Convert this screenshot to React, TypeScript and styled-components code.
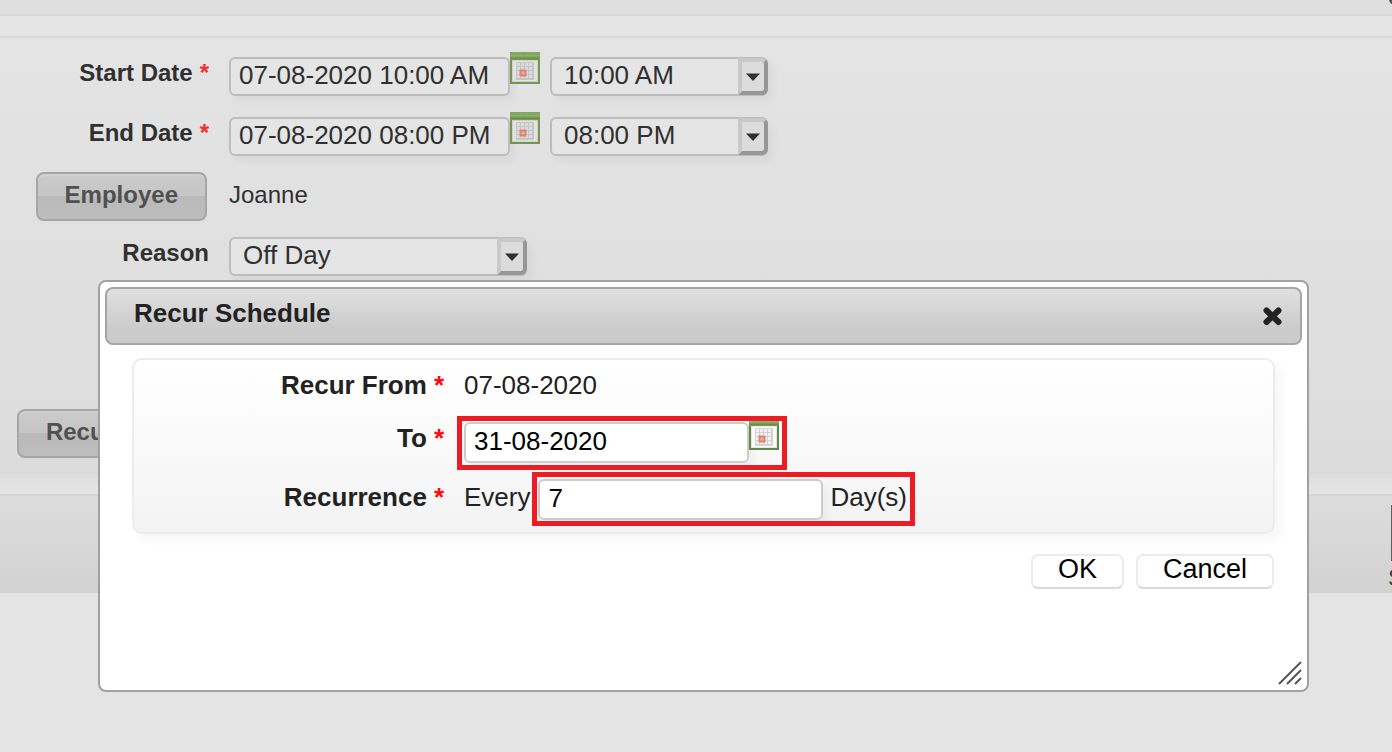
import React, { useState } from "react";
import styled, { createGlobalStyle } from "styled-components";

const GlobalStyle = createGlobalStyle`
  *, *::before, *::after { box-sizing: border-box; }
  html, body { margin: 0; background: #e4e4e4; }
  body, input, select, button { font-family: "Liberation Sans", Arial, Helvetica, sans-serif; }
`;

const Page = styled.div`
  position: relative;
  min-height: 100vh;
  overflow: hidden;
  background: #e4e4e4;
  color: #303030;
  font-size: 24px;
  line-height: 28px;
`;

const TopBar = styled.header`
  display: flex;
  justify-content: flex-end;
  height: 16px;
  overflow: hidden;
  border-bottom: 2px solid #d9d9d9;
  background: #dedede;
`;

const BarDot = styled.svg`
  flex: none;
  width: 12px;
  height: 12px;
  margin: -7px -9px 0 0;
`;

const FormPanel = styled.form`
  display: flex;
  flex-direction: column;
  min-height: 438px;
  margin-top: 20px;
  padding-top: 19px;
  border-top: 2px solid #d8d8d8;
  border-bottom: 2px solid #d8d8d8;
  background: linear-gradient(#e4e4e4, #dcdcdc);
`;

const FormRow = styled.div<{ $height?: number }>`
  display: flex;
  align-items: flex-start;
  min-height: ${(p) => p.$height ?? 60}px;
`;

const LabelCell = styled.div`
  flex: none;
  display: flex;
  justify-content: flex-end;
  width: 209px;
  margin-right: 20px;
`;

const Label = styled.label`
  padding-top: 2px;
  font-weight: bold;
  white-space: nowrap;
`;

const Star = styled.span<{ $bright?: boolean }>`
  margin-left: 7px;
  color: ${(p) => (p.$bright ? "#ff0a0a" : "#ee3030")};
`;

const PageInput = styled.input`
  width: 281px;
  height: 39px;
  padding: 0 8px 2px;
  border: 2px solid #bdbdbd;
  border-radius: 6px;
  outline: none;
  background: #e5e5e5;
  box-shadow: 5px 6px 8px rgba(0, 20, 20, 0.04);
  color: #303030;
  font-size: 26px;
`;

const DialogInput = styled(PageInput)`
  width: 285px;
  height: 41px;
  padding-bottom: 3px;
  border-color: #cccccc;
  background: #fff;
  color: #000;
`;

const IconButton = styled.button<{ $lift: number }>`
  flex: none;
  width: 30px;
  height: 32px;
  margin-top: -${(p) => p.$lift}px;
  padding: 0;
  border: 0;
  background: none;
  svg { display: block; }
`;

const SelectBox = styled.div<{ $width: number }>`
  position: relative;
  width: ${(p) => p.$width}px;
  height: 39px;
  border-radius: 6px;
  box-shadow: 5px 6px 8px rgba(0, 20, 20, 0.04);
`;

const Select = styled.select`
  appearance: none;
  width: 100%;
  height: 100%;
  padding: 0 30px 3px 12px;
  border: 2px solid #bdbdbd;
  border-radius: 6px;
  outline: none;
  background: #e5e5e5;
  color: #303030;
  font-size: 26px;
`;

const Arrow = styled.span`
  position: absolute;
  top: 1px;
  right: 0;
  bottom: 1px;
  display: flex;
  align-items: center;
  justify-content: center;
  width: 30px;
  border: 4px solid;
  border-color: #c9c9c9 #979797 #979797 #c9c9c9;
  border-radius: 0 6px 6px 0;
  background: #dcdcdc;
  pointer-events: none;
`;

const GrayButton = styled.button`
  height: 49px;
  margin: 0 2px 0 0;
  padding: 0 27px 4px;
  border: 2px solid #a6a6a6;
  border-radius: 8px;
  background: linear-gradient(#cacaca, #c6c6c6 50%, #bababa 50%, #bdbdbd);
  box-shadow: inset 0 2px 0 #d2d2d2;
  color: #505050;
  font-size: 24px;
  font-weight: bold;
`;

const Value = styled.span`
  padding-top: 9px;
`;

const Spacer = styled.span`
  flex: none;
  width: 10px;
`;

const Divider = styled.div`
  height: 20px;
  background: linear-gradient(#dcdcdc, #e4e4e4 70%);
`;

const LowerPanel = styled.section`
  display: flex;
  justify-content: flex-end;
  height: 99px;
  overflow: hidden;
  border-top: 2px solid #d4d4d4;
  background: linear-gradient(#dcdcdc, #d2d2d2);
`;

const Action = styled.button`
  flex: none;
  display: flex;
  flex-direction: column;
  align-items: flex-start;
  width: 44px;
  height: 97px;
  margin-right: -40px;
  padding: 9px 0 0;
  border: 0;
  background: none;
  color: #404040;
  font-size: 24px;
  line-height: 28px;
  svg { flex: none; margin-left: 3px; }
`;

const Dialog = styled.div`
  position: absolute;
  top: 280px;
  left: 98px;
  right: 83px;
  display: flex;
  flex-direction: column;
  min-height: 412px;
  padding: 5px;
  border: 2px solid #a1a1a1;
  border-radius: 8px;
  background: #fff;
  color: #222;
  font-size: 26px;
  line-height: 30px;
`;

const DialogHeader = styled.div`
  display: flex;
  align-items: center;
  justify-content: space-between;
  height: 58px;
  padding: 0 16px 0 27px;
  border: 2px solid #a5a5a5;
  border-radius: 8px;
  background: linear-gradient(#e0e0e0, #cbcbcb 75%, #cbcbcb);
`;

const Title = styled.h1`
  margin: 0;
  padding-bottom: 6px;
  font-size: 26px;
  line-height: 30px;
`;

const Close = styled.button`
  width: 22px;
  height: 22px;
  padding: 0;
  border: 0;
  background: none;
  svg { display: block; }
`;

const Card = styled.div`
  display: flex;
  flex-direction: column;
  height: 176px;
  margin: 13px 27px 0 27px;
  border: 2px solid #ececec;
  border-radius: 10px;
  background: linear-gradient(#fff, #f3f3f3);
  box-shadow: 6px 6px 10px rgba(0, 40, 30, 0.04);
`;

const CardRow = styled.div`
  display: flex;
  align-items: flex-start;
  height: 56px;
`;

const CardLabel = styled.label<{ $raised?: boolean }>`
  flex: none;
  width: 310px;
  margin-right: 20px;
  padding-top: ${(p) => (p.$raised ? 7 : 10)}px;
  font-weight: bold;
  text-align: right;
`;

const CardText = styled.span`
  padding-top: 10px;
`;

const Highlight = styled.div<{ $after?: boolean }>`
  display: flex;
  align-items: flex-start;
  height: 54px;
  margin-left: ${(p) => (p.$after ? 2 : -7)}px;
  padding: ${(p) => (p.$after ? "2px 3px 0 1px" : "1px 3px 0 2px")};
  overflow: hidden;
  border: 5px solid #ed1c24;
`;

const Unit = styled.span`
  padding: 3px 0 0 7px;
`;

const Footer = styled.div`
  display: flex;
  justify-content: flex-end;
  gap: 12px;
  padding: 20px 28px 0 0;
`;

const PlainButton = styled.button`
  height: 35px;
  padding: 0 25px 6px;
  border: 2px solid #ebebeb;
  border-bottom-color: #d9d9d9;
  border-radius: 7px;
  background: #fff;
  color: #000;
  font-size: 27px;
  line-height: 27px;
`;

const Grip = styled.svg`
  align-self: flex-end;
  width: 24px;
  height: 24px;
  margin-top: auto;
`;

const Calendar = ({ dim, lift }: { dim?: boolean; lift: number }) => (
  <IconButton type="button" aria-label="Pick a date" $lift={lift}>
    <svg width="30" height="32" viewBox="0 0 30 32">
      <rect x="1" y="1" width="28" height="30" fill={dim ? "#e2e2e2" : "#fff"} stroke={dim ? "#779455" : "#648747"} strokeWidth="2" />
      <rect x="2.500" y="8.500" width="25" height="21" fill="none" stroke={dim ? "#ccd5c2" : "#e3ecda"} strokeWidth="1" />
      <rect width="30" height="8" fill="#83a761" />
      <path d="M1 3.500H29" stroke="#94b57a" strokeWidth="1" strokeDasharray="2 1" />
      <path d="M0 6.500H30" stroke="#6c8d4b" strokeWidth="2" />
      <rect x="6" y="10" width="18" height="18" fill={dim ? "#c5c5c8" : "#d3d3d6"} />
      <path
        d="M7 11h3v3h-3zM11 11h3v3h-3zM15 11h3v3h-3zM19 11h3v3h-3zM7 15h3v3h-3zM11 15h3v3h-3zM15 15h3v3h-3zM19 15h3v3h-3zM7 19h3v3h-3zM15 19h3v3h-3zM19 19h3v3h-3zM7 23h3v3h-3zM11 23h3v3h-3zM15 23h3v3h-3zM19 23h3v3h-3z"
        fill={dim ? "#dcdcdc" : "#f1f1f1"}
      />
      <rect x="10.500" y="18.500" width="5" height="5" fill="#e8b3a6" stroke="#dc8370" strokeWidth="2" />
    </svg>
  </IconButton>
);

const Picker = ({ id, label, value, width }: { id: string; label?: string; value: string; width: number }) => (
  <SelectBox $width={width}>
    <Select id={id} aria-label={label} defaultValue={value}>
      <option>{value}</option>
    </Select>
    <Arrow>
      <svg width="14" height="8" viewBox="0 0 14 8">
        <path d="M0 0.500H14L7 8Z" fill="#303030" />
      </svg>
    </Arrow>
  </SelectBox>
);

interface DateRowProps {
  id: string;
  label: string;
  date: string;
  time: string;
  height?: number;
}

const DateRow = ({ id, label, date, time, height }: DateRowProps) => (
  <FormRow $height={height}>
    <LabelCell>
      <Label htmlFor={id}>
        {label}
        <Star>*</Star>
      </Label>
    </LabelCell>
    <PageInput id={id} defaultValue={date} />
    <Calendar dim lift={5} />
    <Spacer />
    <Picker id={`${id}-time`} label={`${label} time`} value={time} width={218} />
  </FormRow>
);

export default function App() {
  const [until, setUntil] = useState("31-08-2020");
  const [every, setEvery] = useState("7");

  return (
    <Page>
      <GlobalStyle />
      <TopBar>
        <BarDot viewBox="0 0 12 12">
          <circle cx="6" cy="6" r="6" fill="#505050" />
        </BarDot>
      </TopBar>
      <FormPanel onSubmit={(e) => e.preventDefault()}>
        <DateRow id="start" label="Start Date" date="07-08-2020 10:00 AM" time="10:00 AM" />
        <DateRow id="end" label="End Date" date="07-08-2020 08:00 PM" time="08:00 PM" height={55} />
        <FormRow $height={65}>
          <LabelCell>
            <GrayButton type="button">Employee</GrayButton>
          </LabelCell>
          <Value>Joanne</Value>
        </FormRow>
        <FormRow $height={172}>
          <LabelCell>
            <Label htmlFor="reason">Reason</Label>
          </LabelCell>
          <Picker id="reason" value="Off Day" width={298} />
        </FormRow>
        <FormRow>
          <LabelCell>
            <GrayButton type="button">Recurrence</GrayButton>
          </LabelCell>
        </FormRow>
      </FormPanel>
      <Divider />
      <LowerPanel>
        <Action type="button">
          <svg width="40" height="59" viewBox="0 0 40 59">
            <rect width="40" height="56" fill="#606060" />
          </svg>
          S
        </Action>
      </LowerPanel>

      <Dialog role="dialog" aria-labelledby="dialog-title">
        <DialogHeader>
          <Title id="dialog-title">Recur Schedule</Title>
          <Close type="button" aria-label="Close">
            <svg width="22" height="22" viewBox="0 0 22 22">
              <path d="M4.500 5.500L16.500 17M16.500 5.500L4.500 17" stroke="#222" strokeWidth="6" strokeLinecap="round" />
            </svg>
          </Close>
        </DialogHeader>
        <Card>
          <CardRow>
            <CardLabel as="span">
              Recur From
              <Star $bright>*</Star>
            </CardLabel>
            <CardText>07-08-2020</CardText>
          </CardRow>
          <CardRow>
            <CardLabel htmlFor="until" $raised>
              To
              <Star $bright>*</Star>
            </CardLabel>
            <Highlight>
              <DialogInput id="until" value={until} onChange={(e) => setUntil(e.target.value)} />
              <Calendar lift={4} />
            </Highlight>
          </CardRow>
          <CardRow>
            <CardLabel htmlFor="every">
              Recurrence
              <Star $bright>*</Star>
            </CardLabel>
            <CardText>Every</CardText>
            <Highlight $after>
              <DialogInput id="every" value={every} onChange={(e) => setEvery(e.target.value)} />
              <Unit>Day(s)</Unit>
            </Highlight>
          </CardRow>
        </Card>
        <Footer>
          <PlainButton type="button">OK</PlainButton>
          <PlainButton type="button">Cancel</PlainButton>
        </Footer>
        <Grip viewBox="0 0 24 24">
          <path d="M1 23L23 1M9 23L23 9M17 23L23 17" stroke="#555" strokeWidth="2" />
        </Grip>
      </Dialog>
    </Page>
  );
}
